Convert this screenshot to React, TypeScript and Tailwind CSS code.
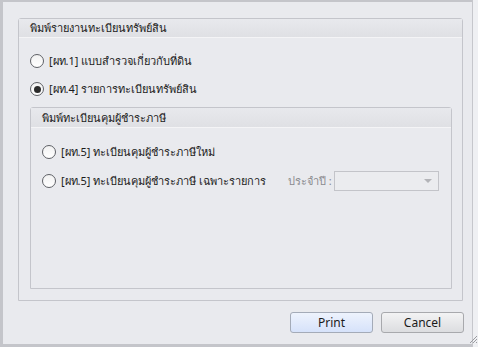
import React, { useState } from 'react';

const Radio = ({ checked }: { checked?: boolean }) => (
  <span className="flex items-center justify-center w-[14px] h-[14px] rounded-full border border-[#5f6166] bg-gradient-to-b from-[#f2f2f2] to-white shrink-0">
    {checked && <span className="w-[7px] h-[7px] rounded-full bg-[#2b2b2b]" />}
  </span>
);

const App = () => {
  const [report, setReport] = useState('pt4');
  const [sub, setSub] = useState('');

  return (
    <div
      className="flex w-[478px] h-[347px] bg-[#e9eaee] text-[#1b1b1b] text-[11px] leading-[14px] overflow-hidden whitespace-nowrap"
      style={{ fontFamily: 'Tahoma, "Noto Sans", "DejaVu Sans", sans-serif' }}
    >
      <div className="flex flex-col flex-1 border-t-2 border-l-[3px] border-b-[3px] border-[#c4c5ca] pl-[15px] pt-[16px]">
        {/* กลุ่มหลัก */}
        <div className="flex flex-col shrink-0 w-[445px] h-[283px] border border-[#c4c5cb] rounded-t-[3px]">
          <div className="shrink-0 h-[19px] flex items-center pl-[11px] bg-gradient-to-b from-[#e8e9ed] to-[#dfe0e4] border-b border-[#f4f4f6]">
            พิมพ์รายงานทะเบียนทรัพย์สิน
          </div>

          <div className="shrink-0 flex items-center gap-[5px] pl-[11px] mt-[16px] h-[14px]" onClick={() => setReport('pt1')}>
            <Radio checked={report === 'pt1'} />
            <span>[ผท.1] แบบสำรวจเกี่ยวกับที่ดิน</span>
          </div>
          <div className="shrink-0 flex items-center gap-[5px] pl-[11px] mt-[14px] h-[14px]" onClick={() => setReport('pt4')}>
            <Radio checked={report === 'pt4'} />
            <span>[ผท.4] รายการทะเบียนทรัพย์สิน</span>
          </div>

          {/* กลุ่มย่อย */}
          <div className="shrink-0 flex flex-col ml-[11px] mt-[11px] w-[422px] h-[182px] border border-[#c4c5cb] rounded-t-[3px]">
            <div className="shrink-0 h-[20px] flex items-center pl-[11px] bg-gradient-to-b from-[#e8e9ed] to-[#dfe0e4] border-b border-[#f4f4f6]">
              พิมพ์ทะเบียนคุมผู้ชำระภาษี
            </div>

            <div className="shrink-0 flex items-center gap-[5px] pl-[11px] mt-[17px] h-[14px]" onClick={() => setSub('new')}>
              <Radio checked={sub === 'new'} />
              <span>[ผท.5] ทะเบียนคุมผู้ชำระภาษีใหม่</span>
            </div>
            <div className="shrink-0 flex items-center pl-[11px] mt-[15px] h-[14px]">
              <div className="flex items-center gap-[5px] w-[246px]" onClick={() => setSub('item')}>
                <Radio checked={sub === 'item'} />
                <span>[ผท.5] ทะเบียนคุมผู้ชำระภาษี เฉพาะรายการ</span>
              </div>
              <span className="text-[#8a8b8f] w-[46px]">ประจำปี :</span>
              <div className="relative w-[105px] h-[20px] border border-[#c3c4c9] bg-[#ebecef]">
                <span className="absolute right-[6px] top-[7px] w-0 h-0 border-l-[4px] border-r-[4px] border-t-[4px] border-l-transparent border-r-transparent border-t-[#b3b4b8]" />
              </div>
            </div>
          </div>
        </div>

        <div className="flex justify-end gap-[8px] mt-[11px] pr-[8px]">
          <button className="w-[83px] h-[21px] rounded-[3px] border border-[#a4abb8] bg-gradient-to-b from-[#eef3fd] to-[#d6e2fa] text-[12px]">
            Print
          </button>
          <button className="w-[83px] h-[21px] rounded-[3px] border border-[#a8a9ad] bg-gradient-to-b from-[#f3f3f4] to-[#dcdde0] text-[12px]">
            Cancel
          </button>
        </div>
      </div>

      <div className="relative w-[6px] border-l border-[#c6c7cc] bg-[#eff0f3]">
        <svg className="absolute right-0 bottom-[3px]" width="10" height="10" viewBox="0 0 10 10">
          <path d="M9 2 L2 9 M9 5 L5 9 M9 8 L8 9" stroke="#9a9ba0" strokeWidth="1" />
        </svg>
      </div>
    </div>
  );
};

export default App;
